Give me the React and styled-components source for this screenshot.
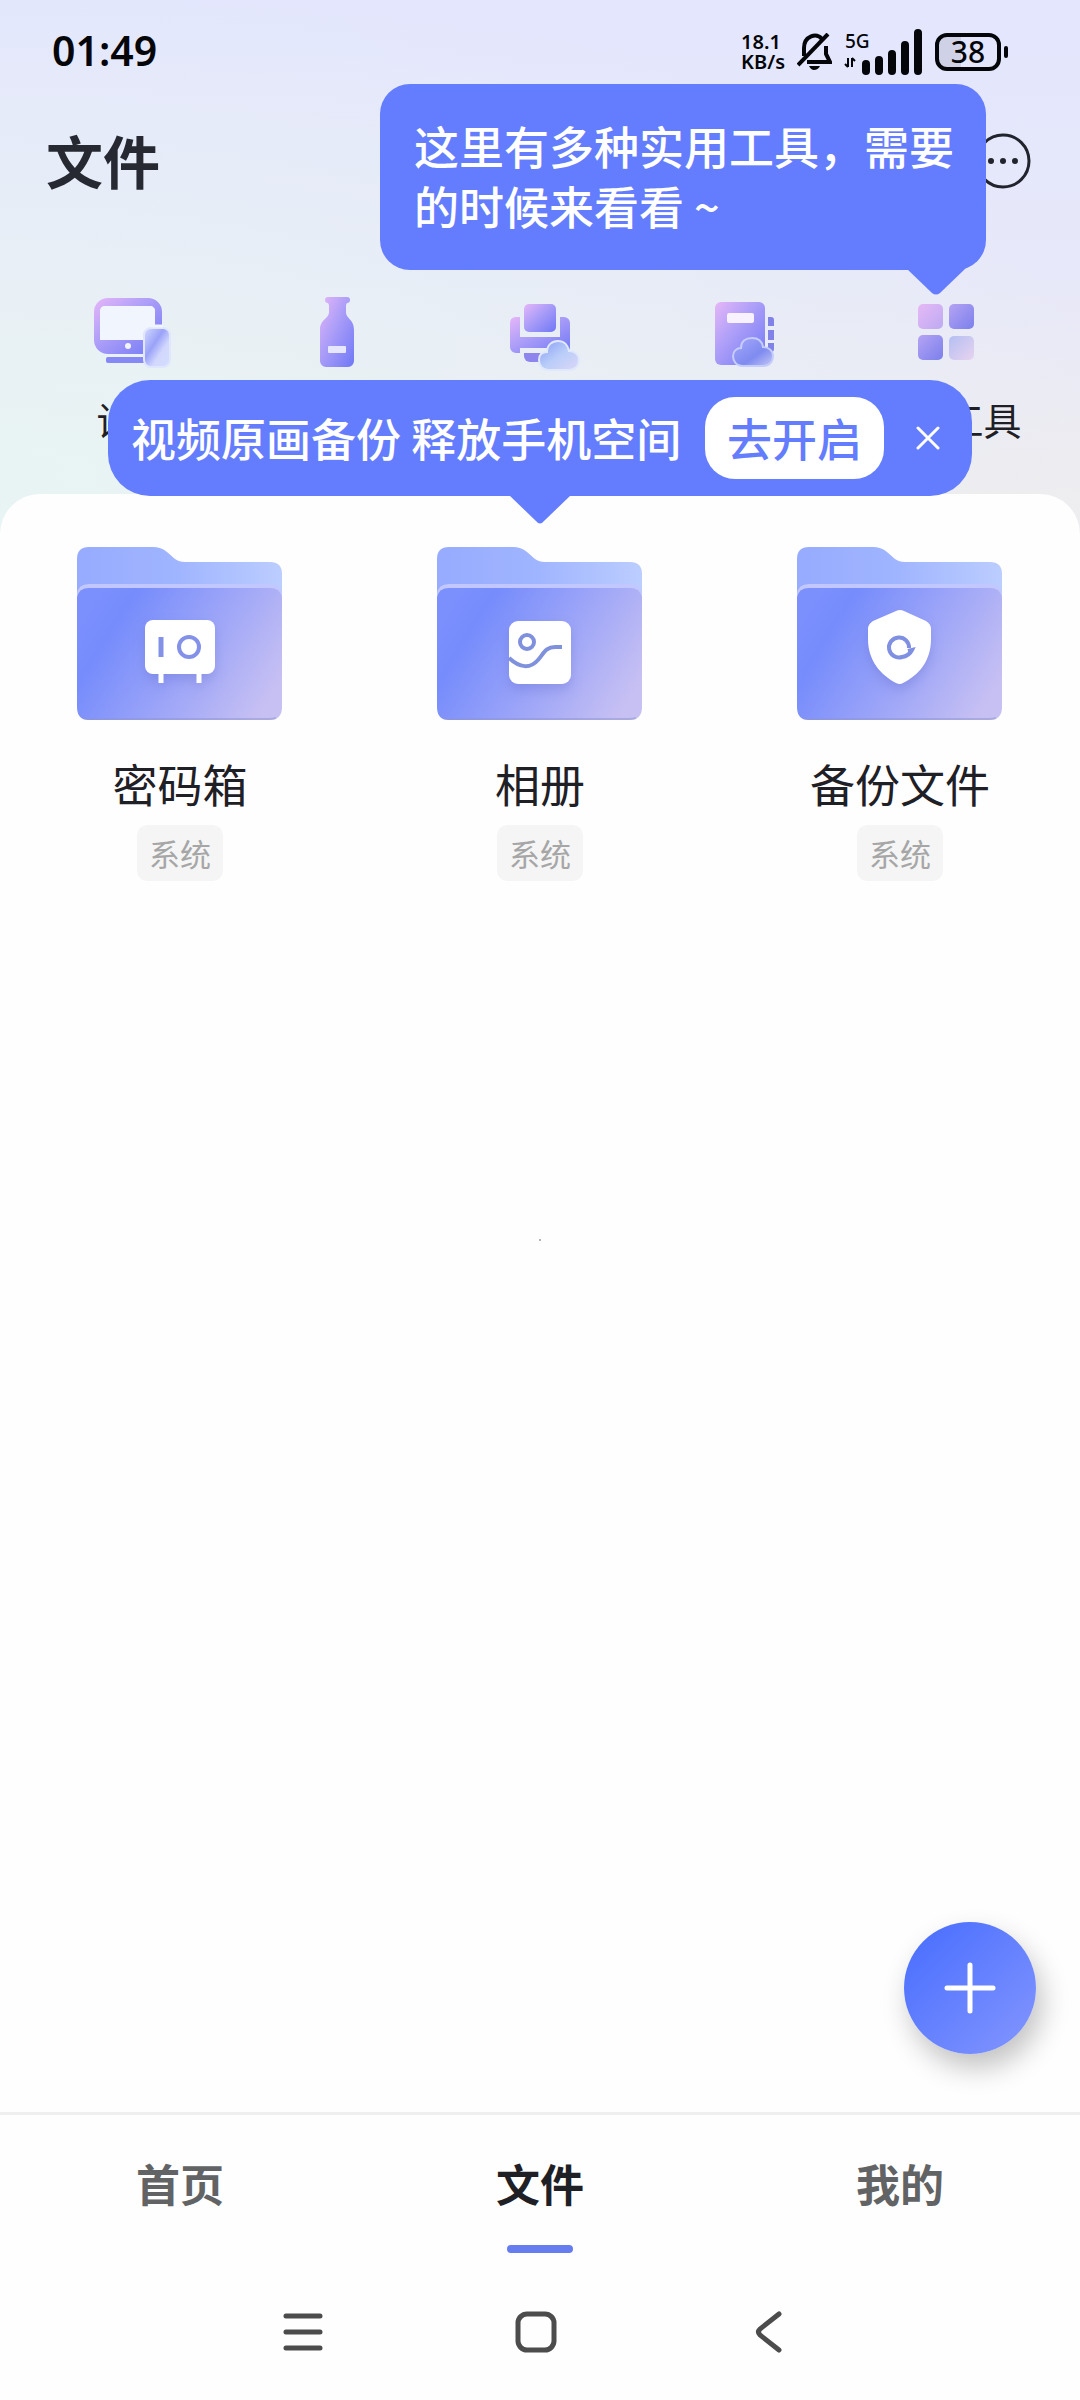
import React, { useState } from "react";
import styled, { createGlobalStyle } from "styled-components";

const tools = [
  { name: "设备", icon: "device", showLabel: true },
  { name: "漂流瓶", icon: "bottle" },
  { name: "打印", icon: "printer" },
  { name: "通讯录", icon: "contacts" },
  { name: "更多工具", icon: "more", showLabel: true },
];

const folders = [
  { name: "密码箱", tag: "系统", icon: "safe" },
  { name: "相册", tag: "系统", icon: "album" },
  { name: "备份文件", tag: "系统", icon: "shield" },
];

const tabs = ["首页", "文件", "我的"];

const toolShapes = {
  device: (
    <>
      <path
        fill="url(#tool)"
        fillRule="evenodd"
        d="M14 6H54a14 14 0 0 1 14 14V48a14 14 0 0 1-14 14H14A14 14 0 0 1 0 48V20A14 14 0 0 1 14 6ZM11 14a5 5 0 0 0-5 5V48H61V19a5 5 0 0 0-5-5Z"
      />
      <path fill="#f1f5fd" d="M11 14H56a5 5 0 0 1 5 5V48H6V19a5 5 0 0 1 5-5Z" />
      <circle cx="34" cy="54" r="3" fill="#f1f5fd" />
      <rect x="12" y="65" width="42" height="6" rx="2" fill="#8588f5" />
      <rect x="50" y="36" width="26" height="39" rx="7" fill="url(#glass)" stroke="#dfe6fd" strokeWidth="2" />
      <path d="M57 34h12" stroke="#f1f5fd" strokeWidth="3" />
    </>
  ),
  bottle: (
    <>
      <path
        fill="url(#tool)"
        d="M31 5H50a3 3 0 0 1 0 6L49 13V20C49 27 57 27 57 38V69a6 6 0 0 1-6 6H29a6 6 0 0 1-6-6V38C23 27 32 27 32 20V13L31 11a3 3 0 0 1 0-6Z"
      />
      <rect x="31" y="54" width="18" height="7" rx="1" fill="#e6e6fd" />
    </>
  ),
  printer: (
    <>
      <rect x="24" y="12" width="32" height="28" rx="5" fill="url(#tool)" />
      <path
        fill="url(#tool)"
        d="M15 25H20V45H60V25H64a6 6 0 0 1 6 6V55a6 6 0 0 1-6 6H60V56H20V61H16a6 6 0 0 1-6-6V31a6 6 0 0 1 5-6Z"
      />
      <path fill="#8e86ed" d="M24 61H54V70H30a6 6 0 0 1-6-6Z" />
      <path
        fill="url(#cloud)"
        stroke="#e0e9fb"
        strokeWidth="2"
        d="M48 78C42 78 39 73 39 68C39 63 42 60 47 60C47 53 52 49 58 49C64 49 68 53 69 59C75 59 79 63 79 68C79 74 75 78 69 78Z"
      />
    </>
  ),
  contacts: (
    <>
      <rect x="12" y="10" width="50" height="63" rx="6" fill="url(#tool)" />
      <rect x="24" y="21" width="27" height="10" rx="2" fill="#f7f2fe" />
      <path fill="#8082e8" d="M65 25h3q3 0 3 3v6h-6zM65 38h6v10h-6zM65 51h6v6q0 3-3 3h-3z" />
      <path
        fill="url(#cloudDeep)"
        stroke="#c4cdfb"
        strokeWidth="2"
        d="M40 74C33 74 30 69 30 64C30 59 34 56 38 56C38 49 43 46 49 46C55 46 59 49 60 55C66 55 70 59 70 64C70 70 66 74 60 74Z"
      />
    </>
  ),
  more: (
    <>
      <rect x="12" y="12" width="25" height="25" rx="5" fill="url(#pink)" />
      <rect x="43" y="12" width="25" height="25" rx="5" fill="url(#violet)" />
      <rect x="12" y="43" width="25" height="25" rx="5" fill="url(#violet)" />
      <rect x="43" y="44" width="25" height="24" rx="5" fill="url(#faint)" />
    </>
  ),
};

const folderShapes = {
  safe: (
    <>
      <rect x="68" y="73" width="70" height="54" rx="8" fill="#fff" />
      <path d="M84 127v9M122 127v9" stroke="#fff" strokeWidth="5" />
      <path d="M84 90v20" stroke="#8491e8" strokeWidth="5" />
      <circle cx="112" cy="100" r="10" fill="none" stroke="#8491e8" strokeWidth="4" />
    </>
  ),
  album: (
    <>
      <rect x="72" y="74" width="62" height="63" rx="9" fill="#fff" />
      <circle cx="90" cy="95" r="7" fill="none" stroke="#7f90dd" strokeWidth="4" />
      <path
        d="M72 111C83 121 93 122 101 113C107 106 109 100 118 100H125"
        fill="none"
        stroke="#7f90dd"
        strokeWidth="4"
      />
    </>
  ),
  shield: (
    <>
      <path
        fill="#fff"
        d="M99 64Q103 62 107 64L129 74Q134 77 134 82V92C134 114 122 128 106 136Q103 138 99 136C84 128 71 114 71 92V82Q71 77 76 74Z"
      />
      <path
        d="M112 101A10 10 0 1 0 105 110Q112 109 115 103L111 104"
        fill="none"
        stroke="#7f8fe2"
        strokeWidth="4"
      />
    </>
  ),
};

const Gradients = () => (
  <HiddenSvg aria-hidden="true">
    <defs>
      <linearGradient id="tool" x1="0" y1="0" x2="1" y2="1">
        <stop offset="0" stopColor="#e6b6f8" />
        <stop offset="0.4" stopColor="#b0a0f8" />
        <stop offset="1" stopColor="#6f78f6" />
      </linearGradient>
      <linearGradient id="glass" x1="0" y1="0" x2="1" y2="1">
        <stop offset="0" stopColor="#d5dcff" />
        <stop offset="0.4" stopColor="#9aa2f8" />
        <stop offset="0.65" stopColor="#d2d8fd" />
        <stop offset="1" stopColor="#d4defd" />
      </linearGradient>
      <linearGradient id="cloud" x1="0" y1="0" x2="1" y2="1">
        <stop offset="0" stopColor="#8699f5" />
        <stop offset="0.5" stopColor="#b9cdf9" />
        <stop offset="1" stopColor="#dcd7f7" />
      </linearGradient>
      <linearGradient id="cloudDeep" x1="0" y1="0" x2="1" y2="1">
        <stop offset="0" stopColor="#a7a8fa" />
        <stop offset="0.6" stopColor="#7f8bf0" />
        <stop offset="1" stopColor="#c5c8f6" />
      </linearGradient>
      <linearGradient id="pink" x1="0" y1="0" x2="1" y2="1">
        <stop offset="0" stopColor="#e6b9f5" />
        <stop offset="1" stopColor="#bdaaf3" />
      </linearGradient>
      <linearGradient id="violet" x1="0" y1="0" x2="1" y2="1">
        <stop offset="0" stopColor="#b5a3f3" />
        <stop offset="1" stopColor="#7b80ec" />
      </linearGradient>
      <linearGradient id="faint" x1="0" y1="0" x2="1" y2="1">
        <stop offset="0" stopColor="#b4bff2" />
        <stop offset="1" stopColor="#e8d3f0" />
      </linearGradient>
      <linearGradient id="folderBack" x1="0" y1="0" x2="1" y2="0">
        <stop offset="0" stopColor="#97abff" />
        <stop offset="0.5" stopColor="#a0b5ff" />
        <stop offset="1" stopColor="#bccdff" />
      </linearGradient>
      <linearGradient id="folderFront" x1="0" y1="0.3" x2="1" y2="0.7">
        <stop offset="0" stopColor="#7b90fd" />
        <stop offset="0.15" stopColor="#768cfc" />
        <stop offset="0.55" stopColor="#9ba4f8" />
        <stop offset="1" stopColor="#c7c0f3" />
      </linearGradient>
    </defs>
  </HiddenSvg>
);

const StatusIcons = () => (
  <StatusGroup>
    <Speed>
      18.1
      <br />
      KB/s
    </Speed>
    <svg width="35" height="38" viewBox="0 0 35 38" fill="none" stroke="#05060a" strokeWidth="4">
      <path d="M7 23V15C7 3 20-1 25 6" />
      <path d="M29 13V21L33 29H10" />
      <path d="M1 32L31 1" />
      <path d="M12 33H23Q21 37 17 37Q14 37 12 33Z" fill="#05060a" stroke="none" />
    </svg>
    <svg width="79" height="48" viewBox="0 0 79 48">
      <text x="1" y="20" fontFamily="Noto Sans" fontSize="19" fontWeight="500" fill="#05060a">
        5G
      </text>
      <path d="M4 39V30M4 39L1 36M8 30V39M8 30L11 33" fill="none" stroke="#05060a" strokeWidth="2" />
      <g stroke="#05060a" strokeWidth="8" strokeLinecap="round">
        <path d="M22 36V43M35 32V43M48 26V43M61 17V43M74 5V43" />
      </g>
    </svg>
    <Battery>
      <BatteryBody>38</BatteryBody>
      <BatteryTip />
    </Battery>
  </StatusGroup>
);

const Folder = ({ name, tag, icon }) => (
  <FolderItem type="button">
    <svg width="206" height="174" viewBox="0 0 206 174">
      <path
        fill="url(#folderBack)"
        d="M0 12Q0 0 12 0H76Q84 0 90 5L98 12Q102 15 108 15H193Q205 15 205 27V60H0Z"
      />
      <path fill="#c2c8ff" d="M0 47Q1 37 12 37H193Q204 37 205 47V80H0Z" />
      <path fill="url(#folderFront)" d="M0 50Q2 41 12 41H193Q203 41 205 50V160Q205 173 192 173H12Q0 173 0 160Z" />
      <path d="M6 171Q9 172 12 172H193Q196 172 199 171" fill="none" stroke="#8d93cf" strokeOpacity="0.5" strokeWidth="2" />
      <FolderGlyph>{folderShapes[icon]}</FolderGlyph>
    </svg>
    <FolderName>{name}</FolderName>
    <Tag>{tag}</Tag>
  </FolderItem>
);

const App = () => {
  const [activeTab, setActiveTab] = useState("文件");
  const [showTip, setShowTip] = useState(true);
  const [showBanner, setShowBanner] = useState(true);

  return (
    <Screen>
      <GlobalStyle />
      <Gradients />
      <Header>
        <StatusBar>
          <Clock>01:49</Clock>
          <StatusIcons />
        </StatusBar>
        <TitleBar>
          <Title>文件</Title>
          <IconButton type="button" aria-label="更多">
            <svg width="56" height="56" viewBox="0 0 56 56">
              <circle cx="28" cy="28" r="26" fill="none" stroke="#21232d" strokeWidth="3" />
              <g fill="#21232d">
                <circle cx="16" cy="28" r="3" />
                <circle cx="28" cy="28" r="3" />
                <circle cx="40" cy="28" r="3" />
              </g>
            </svg>
          </IconButton>
        </TitleBar>
        <Tools>
          {tools.map((tool) => (
            <Tool key={tool.icon} type="button" aria-label={tool.name}>
              <svg width="80" height="80" viewBox="0 0 80 80">
                {toolShapes[tool.icon]}
              </svg>
              {tool.showLabel && <span>{tool.name}</span>}
            </Tool>
          ))}
        </Tools>
      </Header>

      {showTip && (
        <Tip onClick={() => setShowTip(false)}>
          这里有多种实用工具，需要
          <br />
          的时候来看看 ~
          <TipTail width="60" height="28" viewBox="0 0 60 28">
            <path fill="#647dfe" d="M0 0H60L34 25Q30 28 26 25Z" />
          </TipTail>
        </Tip>
      )}

      {showBanner && (
        <Banner>
          <BannerText>视频原画备份 释放手机空间</BannerText>
          <BannerButton type="button">去开启</BannerButton>
          <IconButton type="button" aria-label="关闭" onClick={() => setShowBanner(false)}>
            <svg width="24" height="24" viewBox="0 0 24 24" stroke="#fff" strokeWidth="3" strokeLinecap="round">
              <path d="M2 2L22 22M22 2L2 22" />
            </svg>
          </IconButton>
          <BannerTail width="60" height="28" viewBox="0 0 60 28">
            <path fill="#647dfe" d="M0 0H60L34 25Q30 30 26 25Z" />
          </BannerTail>
        </Banner>
      )}

      <Panel>
        <FolderGrid>
          {folders.map((folder) => (
            <Folder key={folder.name} {...folder} />
          ))}
        </FolderGrid>
        <Dot />
      </Panel>

      <AddButton type="button" aria-label="新建">
        <svg width="52" height="52" viewBox="0 0 52 52" stroke="#fff" strokeWidth="5" strokeLinecap="round">
          <path d="M26 3V49M3 26H49" />
        </svg>
      </AddButton>

      <TabBar>
        {tabs.map((tab) => (
          <Tab key={tab} type="button" $active={tab === activeTab} onClick={() => setActiveTab(tab)}>
            {tab}
          </Tab>
        ))}
      </TabBar>

      <SystemBar>
        <IconButton type="button" aria-label="最近任务">
          <svg width="42" height="42" viewBox="0 0 42 42" stroke="#4c4c4c" strokeWidth="5" strokeLinecap="round">
            <path d="M4 5H38M4 21H38M4 37H38" />
          </svg>
        </IconButton>
        <IconButton type="button" aria-label="主屏幕">
          <svg width="42" height="42" viewBox="0 0 42 42" fill="none" stroke="#4c4c4c" strokeWidth="5">
            <rect x="3" y="3" width="36" height="36" rx="9" />
          </svg>
        </IconButton>
        <IconButton type="button" aria-label="返回">
          <svg
            width="42"
            height="42"
            viewBox="0 0 42 42"
            fill="none"
            stroke="#4c4c4c"
            strokeWidth="5"
            strokeLinecap="round"
          >
            <path d="M31 3L12 18Q9 21 12 24L31 39" />
          </svg>
        </IconButton>
      </SystemBar>
    </Screen>
  );
};

const GlobalStyle = createGlobalStyle`
  * {
    box-sizing: border-box;
  }
  body {
    margin: 0;
    background: #fefefe;
    font-family: "Noto Sans CJK SC", sans-serif;
    color: #1f2026;
  }
  button {
    padding: 0;
    border: none;
    background: none;
    font: inherit;
    color: inherit;
    cursor: pointer;
  }
  svg {
    display: block;
  }
`;

const HiddenSvg = styled.svg`
  position: absolute;
  width: 0;
  height: 0;
`;

const Screen = styled.div`
  position: relative;
  display: flex;
  flex-direction: column;
  min-height: 100vh;
`;

const Header = styled.header`
  padding-bottom: 95px;
  background:
    radial-gradient(ellipse at 0% 90%, #e8f4f4 0%, rgba(232, 244, 244, 0) 76%),
    linear-gradient(to bottom, #e3e6fd 0%, #e7e8f9 50%, #eeecef 92%);
`;

const StatusBar = styled.div`
  display: flex;
  align-items: center;
  justify-content: space-between;
  height: 104px;
  padding: 0 72px 0 52px;
  color: #05060a;
  font-family: "Noto Sans", sans-serif;
`;

const Clock = styled.span`
  padding-bottom: 4px;
  font-size: 41px;
  font-weight: 600;
`;

const StatusGroup = styled.div`
  display: flex;
  align-items: center;
  gap: 12px;
`;

const Speed = styled.span`
  font-size: 20px;
  font-weight: 600;
  line-height: 20px;
`;

const Battery = styled.span`
  display: flex;
  align-items: center;
  gap: 3px;
`;

const BatteryBody = styled.span`
  width: 66px;
  height: 38px;
  border: 4px solid #05060a;
  border-radius: 12px;
  background: linear-gradient(to right, #cfd1e6 38%, transparent 38%);
  font-size: 30px;
  font-weight: 500;
  line-height: 30px;
  text-align: center;
`;

const BatteryTip = styled.span`
  width: 4px;
  height: 12px;
  border-radius: 2px;
  background: #05060a;
`;

const TitleBar = styled.div`
  display: flex;
  align-items: center;
  justify-content: space-between;
  height: 114px;
  padding: 0 49px 0 46px;
`;

const Title = styled.h1`
  margin: 0;
  padding-bottom: 4px;
  font-size: 57px;
  font-weight: 700;
  color: #262931;
`;

const IconButton = styled.button`
  display: flex;
  align-items: center;
  justify-content: center;
`;

const Tools = styled.nav`
  display: grid;
  grid-template-columns: repeat(5, 1fr);
  padding: 74px 33px 0;
`;

const Tool = styled.button`
  display: flex;
  flex-direction: column;
  align-items: center;
  gap: 23px;
  font-size: 38px;
  line-height: 48px;
  white-space: nowrap;
`;

const Tip = styled.div`
  position: absolute;
  top: 84px;
  right: 94px;
  padding: 32px 32px 34px 34px;
  border-radius: 30px;
  background: #647dfe;
  color: #fff;
  font-size: 45px;
  font-weight: 500;
  line-height: 60px;
  white-space: nowrap;
`;

const TipTail = styled.svg`
  position: absolute;
  top: 100%;
  right: 20px;
  margin-top: -2px;
`;

const Banner = styled.div`
  position: absolute;
  top: 380px;
  left: 10%;
  right: 10%;
  display: flex;
  align-items: center;
  height: 116px;
  padding: 0 32px 0 23px;
  border-radius: 42px;
  background: #647dfe;
  color: #fff;
  font-size: 45px;
  font-weight: 500;
  line-height: 60px;
  white-space: nowrap;
`;

const BannerText = styled.span`
  flex: 1;
`;

const BannerButton = styled.button`
  height: 82px;
  margin-right: 32px;
  padding: 0 22px;
  border-radius: 30px;
  background: #fff;
  color: #647dfe;
`;

const BannerTail = styled.svg`
  position: absolute;
  top: 100%;
  left: 50%;
  margin-left: -30px;
`;

const Panel = styled.main`
  flex: 1;
  margin-top: -44px;
  padding-top: 53px;
  border-radius: 40px 40px 0 0;
  background: #fefefe;
`;

const FolderGrid = styled.div`
  display: grid;
  grid-template-columns: repeat(3, 1fr);
`;

const FolderItem = styled.button`
  display: flex;
  flex-direction: column;
  align-items: center;
`;

const FolderGlyph = styled.g`
  filter: drop-shadow(0 6px 6px rgba(90, 100, 200, 0.3));
`;

const FolderName = styled.span`
  margin-top: 35px;
  font-size: 45px;
  line-height: 56px;
`;

const Tag = styled.span`
  margin-top: 13px;
  padding: 0 12px;
  border-radius: 10px;
  background: #f5f5f5;
  color: #a6a6a6;
  font-size: 31px;
  line-height: 56px;
`;

const Dot = styled.div`
  width: 2px;
  height: 2px;
  margin: 358px auto 0;
  background: #b5b5b5;
`;

const AddButton = styled.button`
  position: fixed;
  right: 44px;
  bottom: 346px;
  display: flex;
  align-items: center;
  justify-content: center;
  width: 132px;
  height: 132px;
  border-radius: 50%;
  background: linear-gradient(135deg, #4c70fe 10%, #7e92ff 90%);
  box-shadow: 6px 14px 28px rgba(0, 0, 0, 0.24);
`;

const TabBar = styled.nav`
  display: grid;
  grid-template-columns: repeat(3, 1fr);
  padding: 38px 0 11px;
  border-top: 3px solid #efefef;
`;

const Tab = styled.button`
  font-size: 44px;
  font-weight: 700;
  line-height: 60px;
  color: ${(props) => (props.$active ? "#1f2026" : "#626365")};

  &::after {
    content: "";
    display: block;
    width: 66px;
    height: 8px;
    margin: 32px auto 0;
    border-radius: 4px;
    background: ${(props) => (props.$active ? "#657dee" : "transparent")};
  }
`;

const SystemBar = styled.nav`
  display: grid;
  grid-template-columns: repeat(3, 1fr);
  height: 136px;
  padding: 0 195px 0 186px;
`;

export default App;
